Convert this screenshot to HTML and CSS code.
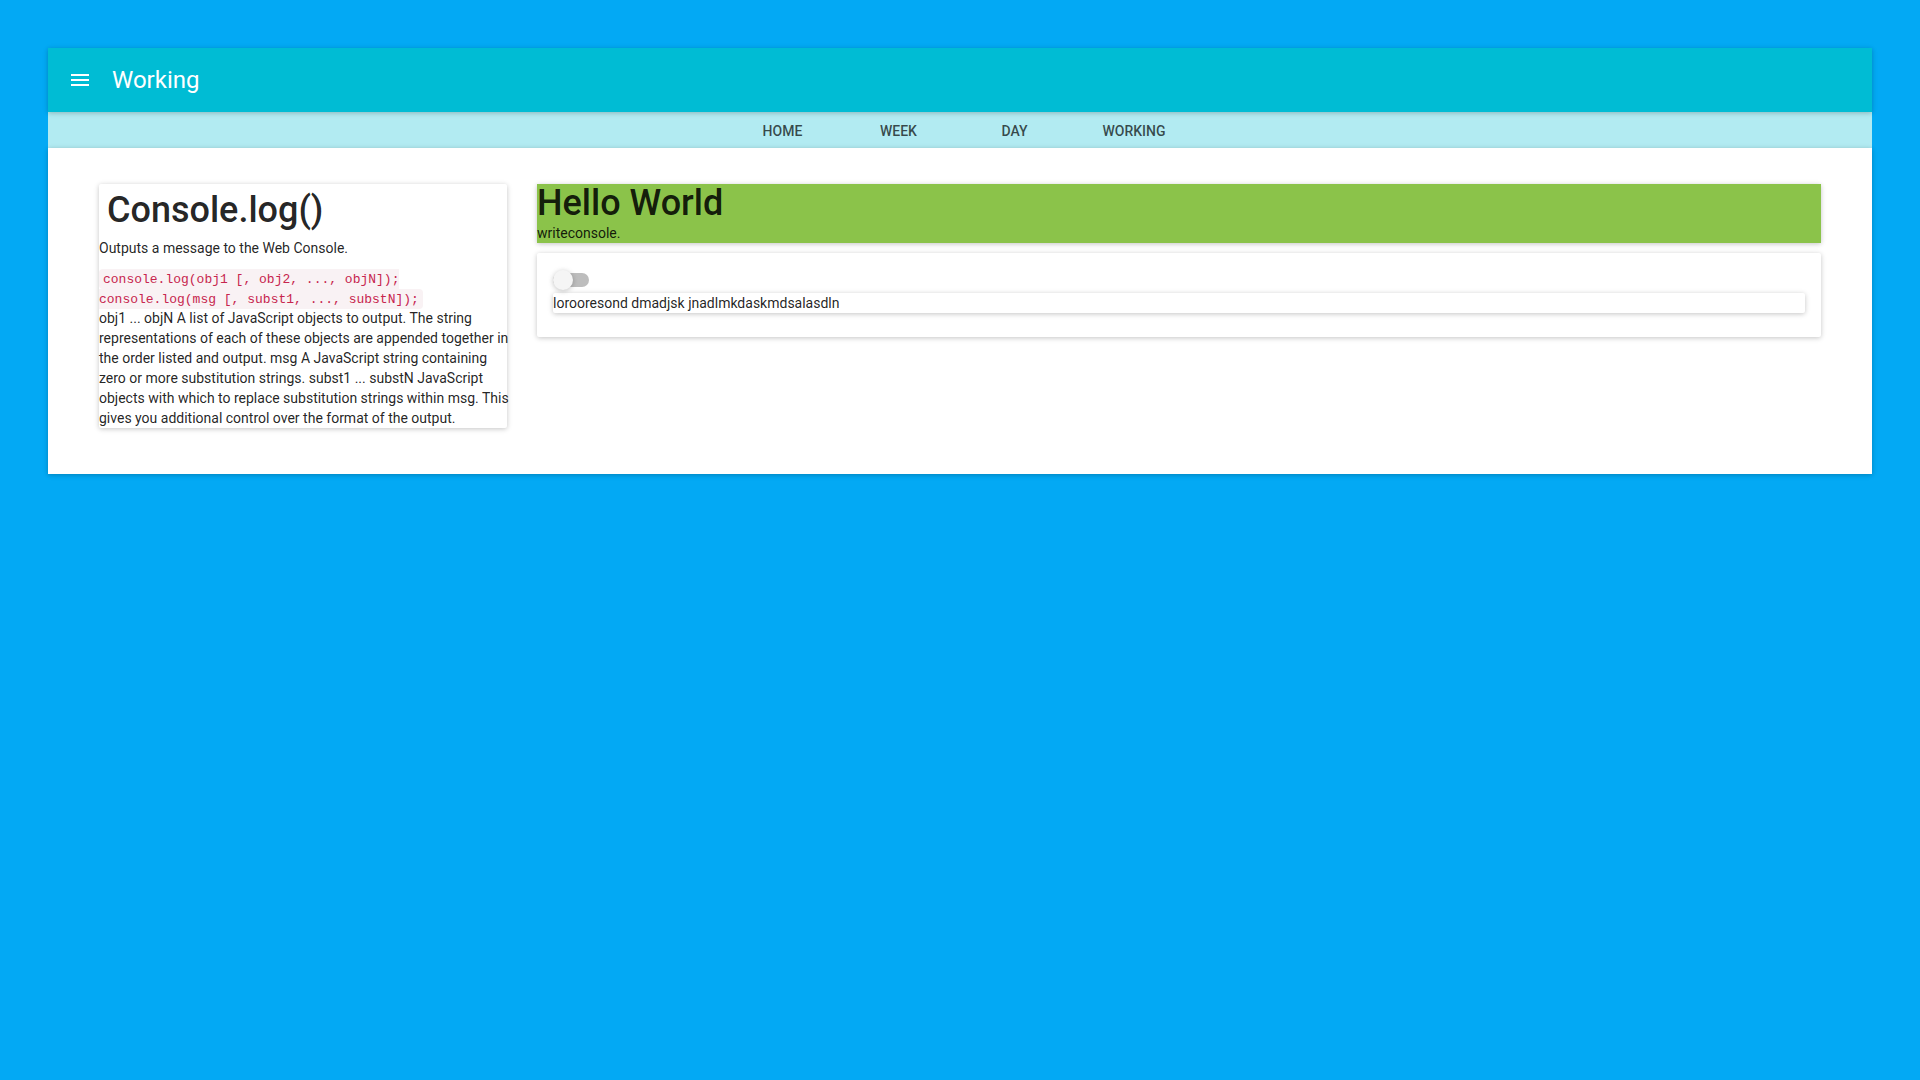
FILE: index.html
```
<!DOCTYPE html>
<html lang="en">
<head>
<meta charset="utf-8">
<title>Working</title>
<link rel="stylesheet" href="styles.css">
</head>
<body>
<header class="app-bar paper">
  <button class="menu-button" type="button" aria-label="Menu">
    <svg width="24" height="24" viewBox="0 0 24 24" fill="currentColor"><path d="M3 18h18v-2H3v2zm0-5h18v-2H3v2zm0-7v2h18V6H3z"/></svg>
  </button>
  <span class="app-title">Working</span>
</header>
<nav class="tabs">
  <a class="tab" href="#home">Home</a>
  <a class="tab" href="#week">Week</a>
  <a class="tab" href="#day">Day</a>
  <a class="tab" href="#working">Working</a>
</nav>
<main class="content paper">
  <aside class="side">
    <section class="card paper">
      <h1 class="heading heading-padded">Console.log()</h1>
      <p class="intro">Outputs a message to the Web Console.</p>
      <div class="syntax"><code class="code">console.log(obj1 [, obj2, ..., objN]);<br>console.log(msg [, subst1, ..., substN]);</code></div>
      <div class="description">obj1 ... objN A list of JavaScript objects to output. The string
representations of each of these objects are appended together in
the order listed and output. msg A JavaScript string containing
zero or more substitution strings. subst1 ... substN JavaScript
objects with which to replace substitution strings within msg. This
gives you additional control over the format of the output.</div>
    </section>
  </aside>
  <div class="primary">
    <section class="hero paper">
      <h1 class="heading">Hello World</h1>
      <div>writeconsole.</div>
    </section>
    <section class="card panel paper">
      <div class="switch-row"><input class="switch" type="checkbox" role="switch" aria-label="Toggle"></div>
      <div class="card paper">lorooresond dmadjsk jnadlmkdaskmdsalasdln</div>
    </section>
  </div>
</main>
</body>
</html>
```
FILE: styles.css
```
* {
  box-sizing: border-box;
}

body {
  margin: 0;
  padding: 48px;
  background: #03a9f4;
  color: rgba(0, 0, 0, 0.87);
  font: 14px/20px Roboto, sans-serif;
}

.paper {
  box-shadow: 0 1px 6px rgba(0, 0, 0, 0.12), 0 1px 4px rgba(0, 0, 0, 0.12);
}

.app-bar {
  position: relative;
  z-index: 1;
  display: flex;
  align-items: center;
  gap: 8px;
  padding: 8px;
  background: #00bcd4;
  color: #fff;
}

.menu-button {
  display: flex;
  padding: 12px;
  border: 0;
  background: none;
  color: inherit;
}

.app-title {
  font-size: 24px;
  line-height: 32px;
}

.tabs {
  display: flex;
  justify-content: center;
  gap: 28px;
  background: #b2ebf2;
}

.tab {
  min-width: 88px;
  padding: 2px 16px 0;
  color: rgba(0, 0, 0, 0.7);
  font-weight: 500;
  line-height: 34px;
  text-align: center;
  text-decoration: none;
  text-transform: uppercase;
}

.content {
  display: grid;
  grid-template-columns: 1fr 3fr;
  padding: 36px 36px 46px;
  background: #fff;
}

.side,
.primary {
  min-width: 0;
  padding: 0 15px;
}

.card {
  border-radius: 2px;
  background: #fff;
}

.heading {
  margin: 0;
  font-size: 36px;
  font-weight: 500;
  line-height: 39px;
}

.heading-padded {
  padding: 7px 8px 8px;
}

.intro {
  margin: 0 0 12px;
}

.syntax {
  margin-bottom: -2px;
  font: 13px/20px "Liberation Mono", monospace;
}

.code {
  padding: 3px 4px 2px;
  border-radius: 4px;
  background: #f9f2f4;
  color: #c7254e;
  font: inherit;
}

.description {
  white-space: pre;
}

.hero {
  margin-bottom: 10px;
  background: #8bc34a;
}

.panel {
  padding: 16px 16px 24px;
}

.switch-row {
  display: flex;
  align-items: center;
  height: 24px;
  padding-bottom: 2px;
}

.switch {
  display: flex;
  align-items: center;
  width: 36px;
  height: 14px;
  margin: 0;
  border-radius: 7px;
  background: #bdbdbd;
  appearance: none;
}

.switch::before {
  content: "";
  flex: none;
  width: 20px;
  height: 20px;
  border-radius: 50%;
  background: #f5f5f5;
  box-shadow: 0 1px 6px rgba(0, 0, 0, 0.12), 0 1px 4px rgba(0, 0, 0, 0.12);
}

.switch:checked {
  justify-content: flex-end;
}

@media (max-width: 1700px) {
  .content {
    grid-template-columns: 1fr;
    gap: 10px;
  }

  .description {
    white-space: normal;
  }
}
```
